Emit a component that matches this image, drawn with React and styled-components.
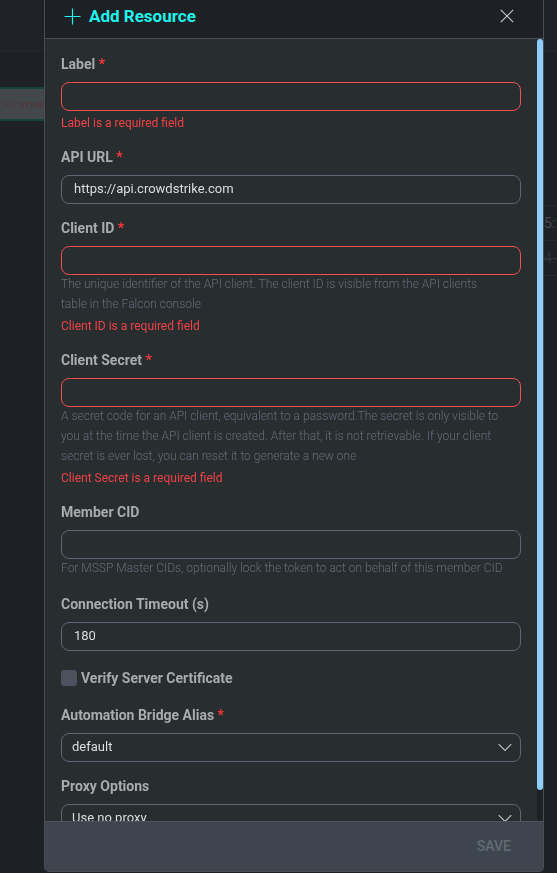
import React from "react";
import styled, { createGlobalStyle } from "styled-components";

const GlobalStyle = createGlobalStyle`
  *, *::before, *::after { box-sizing: border-box; }
  body {
    margin: 0;
    background: #1d2024;
    color: #b0b1b3;
    font-family: Roboto, "Liberation Sans", sans-serif;
  }
  input, select, button { font-family: inherit; }
`;

const Page = styled.div`
  height: 100vh;
  display: flex;
  flex-direction: column;
  overflow: hidden;
`;

const TopBar = styled.div`
  flex: none;
  height: 52px;
  background: #1f2226;
  border-bottom: 1px solid #25292d;
`;

const Workspace = styled.main`
  flex: 1;
  display: flex;
  justify-content: space-between;
`;

const VendorColumn = styled.div`
  width: 45px;
  padding-top: 35px;
`;

const VendorChip = styled.div`
  height: 34px;
  display: flex;
  align-items: center;
  justify-content: flex-end;
  border: solid #1a3f41;
  border-width: 2px 0;
  background: #42484c;
  color: #50393d;
  font-size: 9px;
  font-family: "Open Sans", sans-serif;
`;

const TimeColumn = styled.div`
  width: 13px;
  padding-top: 153px;
`;

const TimeCell = styled.div`
  height: 35px;
  border-top: 1px solid #25282c;
  overflow: hidden;
  white-space: nowrap;
  font-size: 14px;
  line-height: 34px;
  color: ${(p) => (p.$muted ? "#303338" : "#484b50")};
  text-decoration: ${(p) => (p.$muted ? "line-through" : "none")};
`;

const Overlay = styled.div`
  position: fixed;
  inset: 0;
  display: flex;
  padding: 0 13px 1px 44px;
`;

const Dialog = styled.section`
  flex: 1;
  min-width: 0;
  display: flex;
  flex-direction: column;
  border: 1px solid #4b4e51;
  border-top: 0;
  border-radius: 0 0 5px 5px;
  overflow: hidden;
  background: #282d30;
`;

const Header = styled.header`
  flex: none;
  height: 39px;
  display: flex;
  align-items: center;
  justify-content: space-between;
  padding: 0 27px 6px 19px;
  background: #1d2024;
  border-bottom: 1px solid #4b4e51;
`;

const Title = styled.h1`
  margin: 0;
  display: flex;
  align-items: center;
  gap: 8px;
  font-size: 17px;
  line-height: 20px;
  font-weight: 700;
  color: #20f3ea;
`;

const CloseButton = styled.button`
  display: flex;
  padding: 2px;
  border: 0;
  background: none;
  color: #c4c5c6;
`;

const Body = styled.div`
  flex: 1;
  min-height: 0;
  display: flex;
`;

const Form = styled.form`
  flex: 1;
  min-width: 0;
  overflow-y: auto;
  scrollbar-width: none;
  display: flex;
  flex-direction: column;
  gap: 14px;
  padding: 15px 16px;
`;

const ScrollTrack = styled.div`
  flex: none;
  width: 6px;
  border-radius: 3px;
  background: #1d2024;
`;

const ScrollThumb = styled.div`
  height: 96%;
  border-radius: 3px;
  background: #8cceff;
`;

const Field = styled.div`
  flex: none;
  display: flex;
  flex-direction: column;
`;

const Label = styled.label`
  margin-bottom: 8px;
  font-size: 14px;
  line-height: 20px;
  font-weight: 700;
  color: #aaabac;
`;

const Required = styled.span`
  color: #f8383b;
`;

const TextInput = styled.input`
  width: 100%;
  height: 29px;
  padding: 0 12px 2px;
  border: 1px solid ${(p) => (p.$invalid ? "#f2504c" : "#5f6573")};
  border-radius: 8px;
  outline: 0;
  background: transparent;
  color: #dcdddd;
  font-size: 13px;
`;

const SelectBox = styled.div`
  position: relative;
  display: flex;
`;

const Select = styled.select`
  appearance: none;
  width: 100%;
  height: 29px;
  padding: 0 32px 2px 10px;
  border: 1px solid #5f6573;
  border-radius: 8px;
  background: transparent;
  color: #dcdddd;
  font-size: 13px;
`;

const Chevron = styled.svg`
  position: absolute;
  right: 9px;
  top: 10px;
  pointer-events: none;
`;

const HelpText = styled.p`
  margin: -1px 0 0;
  padding-right: 16px;
  font-size: 12px;
  line-height: 20px;
  font-weight: 300;
  color: #646c78;

  &:last-child {
    margin-bottom: 2px;
  }
`;

const ErrorText = styled.p`
  margin: 2px 0 0;
  font-size: 12px;
  line-height: 20px;
  color: #ef4245;
`;

const CheckRow = styled.div`
  flex: none;
  display: flex;
  align-items: center;
  gap: 4px;
  margin: 3px 0;
`;

const Checkbox = styled.input`
  appearance: none;
  width: 16px;
  height: 16px;
  margin: 0;
  border-radius: 3px;
  background: #4b515d;
`;

const CheckLabel = styled(Label)`
  margin: 0;
`;

const Footer = styled.footer`
  flex: none;
  height: 50px;
  display: flex;
  align-items: center;
  justify-content: flex-end;
  padding: 0 32px 1px;
  background: #3f454e;
  border-top: 1px solid #4f5357;
`;

const SaveButton = styled.button`
  padding: 0;
  border: 0;
  background: none;
  color: #626b76;
  font-size: 14px;
  font-weight: 500;
  line-height: 20px;
`;

function FieldLabel({ id, required, children }) {
  return (
    <Label htmlFor={id}>
      {children}
      {required && <Required> *</Required>}
    </Label>
  );
}

function TextField({ id, label, required, value, help, error }) {
  return (
    <Field>
      <FieldLabel id={id} required={required}>{label}</FieldLabel>
      <TextInput id={id} type="text" defaultValue={value} $invalid={Boolean(error)} />
      {help && <HelpText>{help}</HelpText>}
      {error && <ErrorText>{error}</ErrorText>}
    </Field>
  );
}

function SelectField({ id, label, required, option }) {
  return (
    <Field>
      <FieldLabel id={id} required={required}>{label}</FieldLabel>
      <SelectBox>
        <Select id={id}>
          <option>{option}</option>
        </Select>
        <Chevron width="14" height="9" viewBox="0 0 14 9" fill="none" stroke="#c4c5c6" strokeWidth="1.1">
          <path d="M.7 1.2 7 7.5l6.3-6.3" />
        </Chevron>
      </SelectBox>
    </Field>
  );
}

export default function App() {
  return (
    <>
      <GlobalStyle />
      <Page>
        <TopBar />
        <Workspace>
          <VendorColumn>
            <VendorChip>OWD<b>STRIK</b></VendorChip>
          </VendorColumn>
          <TimeColumn>
            <TimeCell>5:1</TimeCell>
            <TimeCell $muted>4:4</TimeCell>
            <TimeCell />
          </TimeColumn>
        </Workspace>
      </Page>
      <Overlay>
        <Dialog role="dialog" aria-labelledby="dialog-title">
          <Header>
            <Title id="dialog-title">
              <svg width="17" height="17" viewBox="0 0 17 17" stroke="currentColor" strokeWidth="1.2">
                <path d="M8.5.5v16M.5 8.5h16" />
              </svg>
              Add Resource
            </Title>
            <CloseButton type="button" aria-label="Close">
              <svg width="14" height="14" viewBox="0 0 14 14" stroke="currentColor" strokeWidth="1.2">
                <path d="m.8.8 12.4 12.4M13.2.8.8 13.2" />
              </svg>
            </CloseButton>
          </Header>
          <Body>
            <Form id="resource-form">
              <TextField id="label" label="Label" required error="Label is a required field" />
              <TextField id="api-url" label="API URL" required value="https://api.crowdstrike.com" />
              <TextField
                id="client-id"
                label="Client ID"
                required
                help="The unique identifier of the API client. The client ID is visible from the API clients table in the Falcon console"
                error="Client ID is a required field"
              />
              <TextField
                id="client-secret"
                label="Client Secret"
                required
                help="A secret code for an API client, equivalent to a password.The secret is only visible to you at the time the API client is created. After that, it is not retrievable. If your client secret is ever lost, you can reset it to generate a new one"
                error="Client Secret is a required field"
              />
              <TextField
                id="member-cid"
                label="Member CID"
                help="For MSSP Master CIDs, optionally lock the token to act on behalf of this member CID"
              />
              <TextField id="timeout" label="Connection Timeout (s)" value="180" />
              <CheckRow>
                <Checkbox id="verify" type="checkbox" />
                <CheckLabel htmlFor="verify">Verify Server Certificate</CheckLabel>
              </CheckRow>
              <SelectField id="bridge" label="Automation Bridge Alias" required option="default" />
              <SelectField id="proxy" label="Proxy Options" option="Use no proxy" />
            </Form>
            <ScrollTrack>
              <ScrollThumb />
            </ScrollTrack>
          </Body>
          <Footer>
            <SaveButton type="submit" form="resource-form" disabled>SAVE</SaveButton>
          </Footer>
        </Dialog>
      </Overlay>
    </>
  );
}
